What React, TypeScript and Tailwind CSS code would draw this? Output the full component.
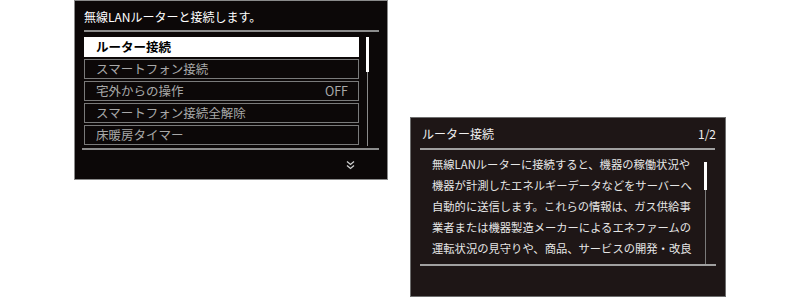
import React from "react";

const font = { fontFamily: '"Noto Sans CJK JP", "Noto Sans", sans-serif' };

function MenuRow({ label, value, selected }: { label: string; value?: string; selected?: boolean }) {
  if (selected) {
    return (
      <div className="h-[20px] shrink-0 bg-white flex items-center pl-[12px] text-[12.5px] font-bold text-black leading-none">
        {label}
      </div>
    );
  }
  return (
    <div className="h-[20px] shrink-0 border border-[#7a7a7a] flex items-center justify-between pl-[11px] pr-[10px] text-[12.5px] text-[#a8a8a8] leading-none">
      <span>{label}</span>
      {value && <span>{value}</span>}
    </div>
  );
}

export default function App() {
  const lines = [
    "無線LANルーターに接続すると、機器の稼働状況や",
    "機器が計測したエネルギーデータなどをサーバーへ",
    "自動的に送信します。これらの情報は、ガス供給事",
    "業者または機器製造メーカーによるエネファームの",
    "運転状況の見守りや、商品、サービスの開発・改良",
  ];
  return (
    <div className="w-[800px] h-[300px] bg-white flex items-start pl-[74px] gap-[22px]" style={font}>
      {/* Left panel */}
      <div className="w-[314px] h-[180px] bg-[#0c0808] border border-[#8a8a8a] flex flex-col">
        <div className="h-[29px] flex items-center pl-[9px] pt-[2px] text-[12px] text-white leading-none">
          無線LANルーターと接続します。
        </div>
        <div className="mx-[9px] h-[2px] bg-[#8c8c8c] mr-[8px]" />
        <div className="flex mt-[5px] h-[109px] pl-[9px]">
          <div className="w-[275px] flex flex-col gap-[2px] overflow-hidden">
            <MenuRow label="ルーター接続" selected />
            <MenuRow label="スマートフォン接続" />
            <MenuRow label="宅外からの操作" value="OFF" />
            <MenuRow label="スマートフォン接続全解除" />
            <MenuRow label="床暖房タイマー" />
          </div>
          <div className="ml-[6px] w-[4px] flex flex-col items-center">
            <div className="w-[3px] h-[35px] bg-white" />
            <div className="w-[1px] flex-1 bg-[#8a8a8a]" />
          </div>
        </div>
        <div className="mx-[7px] h-[2px] bg-[#8c8c8c] mt-[2px] mr-[8px]" />
        <div className="flex-1 flex items-center justify-end pr-[32px]">
          <svg width="9" height="10" viewBox="0 0 9 10" fill="none" stroke="#cfcfcf" strokeWidth="1.3">
            <path d="M1 1.5 L4.5 4.5 L8 1.5" />
            <path d="M1 5.5 L4.5 8.5 L8 5.5" />
          </svg>
        </div>
      </div>

      {/* Right panel */}
      <div className="mt-[117px] w-[316px] h-[180px] bg-[#1e1616] border border-[#6e6e6e] flex flex-col">
        <div className="h-[30px] flex items-center justify-between pl-[11px] pr-[9px] pt-[2px] text-[12px] text-[#f0f0f0] leading-none">
          <span>ルーター接続</span>
          <span>1/2</span>
        </div>
        <div className="ml-[9px] mr-[10px] h-[2px] bg-[#a0a0a0]" />
        <div className="flex h-[112px] mt-[2px] pl-[21px]">
          <div className="w-[268px] flex flex-col pt-[2px]">
            {lines.map((l) => (
              <div key={l} className="h-[21px] flex items-center text-[11.3px] text-[#e6e6e6] whitespace-nowrap leading-none">
                {l}
              </div>
            ))}
          </div>
          <div className="ml-[4px] w-[3px] flex flex-col items-center pt-[10px]">
            <div className="w-[3px] h-[28px] bg-white" />
            <div className="w-[1px] flex-1 bg-[#7a7a7a]" />
          </div>
        </div>
        <div className="ml-[9px] mr-[9px] h-[2px] bg-[#a0a0a0]" />
      </div>
    </div>
  );
}
